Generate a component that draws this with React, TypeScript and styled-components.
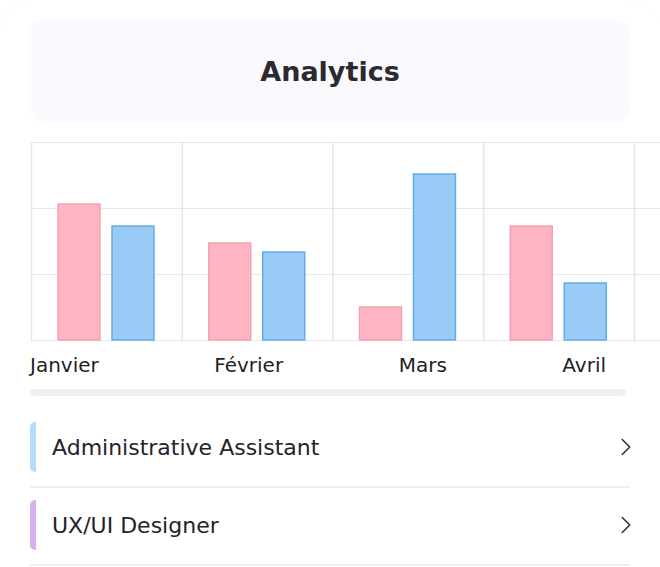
import React from "react";
import styled, { createGlobalStyle } from "styled-components";
import { ChevronRight } from "lucide-react";

const GlobalStyle = createGlobalStyle`
    body{
        margin: 0;
        background: #ffffff;
        font-family: "DejaVu Sans", "Noto Sans", sans-serif;
        color: #222226;
    }
`

interface MonthData {
    label: string
    pink: number
    blue: number
}

interface JobProps {
    title: string
    accent: string
}

const months: MonthData[] = [
    { label: "Janvier", pink: 136, blue: 114 },
    { label: "Février", pink: 97, blue: 88 },
    { label: "Mars", pink: 33, blue: 166 },
    { label: "Avril", pink: 114, blue: 57 },
]

const jobs: JobProps[] = [
    { title: "Administrative Assistant", accent: "#b5dcfb" },
    { title: "UX/UI Designer", accent: "#d7b0ef" },
]

const CHART_H = 198
const COL_W = 150.75
const BAR_W = 42

const BarChart = () => {
    const width = 700
    return (
        <ChartSvg width={width} height={CHART_H + 2} viewBox={`0 0 ${width} ${CHART_H + 2}`}>
            {[0, 66, 132, 198].map((y) => (
                <line key={y} x1={0} x2={width} y1={y + 0.5} y2={y + 0.5} stroke="#e8e8ea" strokeWidth={1.2} />
            ))}
            {[0, 1, 2, 3, 4].map((i) => (
                <line key={i} x1={i * COL_W + 0.5} x2={i * COL_W + 0.5} y1={0} y2={CHART_H + 2} stroke="#e4e4e7" strokeWidth={1.4} />
            ))}
            {months.map((m, i) => {
                const x0 = i * COL_W
                return (
                    <g key={m.label}>
                        <rect
                            x={x0 + 27}
                            y={CHART_H - m.pink}
                            width={BAR_W}
                            height={m.pink}
                            fill="#ffb4c3"
                            stroke="#f59db0"
                            strokeWidth={1.4}
                        />
                        <rect
                            x={x0 + 81}
                            y={CHART_H - m.blue}
                            width={BAR_W}
                            height={m.blue}
                            fill="#99cbf6"
                            stroke="#5ea8e6"
                            strokeWidth={1.4}
                        />
                    </g>
                )
            })}
        </ChartSvg>
    )
}

const JobRow: React.FunctionComponent<JobProps> = ({ title, accent }) => {
    return (
        <JobItem>
            <JobLine>
                <Accent $color={accent} />
                <JobTitle>{title}</JobTitle>
                <Chevron size={30} strokeWidth={1.3} color="#333338" />
            </JobLine>
        </JobItem>
    )
}

export default function App() {
    return (
        <>
            <GlobalStyle />
            <Card>
                <Header>
                    <Title>Analytics</Title>
                </Header>
                <ChartScroller>
                    <BarChart />
                </ChartScroller>
                <Labels>
                    {months.map((m) => (
                        <Label key={m.label}>{m.label}</Label>
                    ))}
                </Labels>
                <ScrollThumb />
                <JobList>
                    {jobs.map((j) => (
                        <JobRow key={j.title} title={j.title} accent={j.accent} />
                    ))}
                </JobList>
            </Card>
        </>
    )
}

const Card = styled.div`
    width: 660px;
    height: 567px;
    box-sizing: border-box;
    padding: 20px 30px 0 30px;
    border-radius: 34px 34px 0 0;
    box-shadow: 0 0 2px rgba(0, 0, 0, 0.05);
    overflow: hidden;
    background: #ffffff;
`

const Header = styled.div`
    height: 102px;
    border-radius: 16px;
    background: #f9f9fe;
    box-shadow: 0 0 6px #f9f9fe;
    display: flex;
    align-items: center;
    justify-content: center;
`

const Title = styled.h1`
    margin: 0;
    font-size: 27px;
    font-weight: 700;
    color: #2a2a30;
`

const ChartScroller = styled.div`
    margin-top: 20px;
    margin-left: 1px;
    margin-right: -30px;
    overflow: hidden;
`

const ChartSvg = styled.svg`
    display: block;
`

const Labels = styled.div`
    width: 576px;
    margin-top: 10px;
    display: flex;
    justify-content: space-between;
`

const Label = styled.span`
    font-size: 20px;
    line-height: 26px;
    color: #1f1f23;
`

const ScrollThumb = styled.div`
    margin-top: 11px;
    width: 596px;
    height: 7px;
    border-radius: 4px;
    background: #efeff1;
`

const JobList = styled.div`
    margin-top: 26px;
    display: flex;
    flex-direction: column;
`

const JobItem = styled.div`
    padding-bottom: 14px;
    border-bottom: 2px solid #efeff5;
    margin-bottom: 12px;
`

const JobLine = styled.div`
    height: 50px;
    display: flex;
    align-items: center;
`

const Accent = styled.div<{ $color: string }>`
    width: 6px;
    height: 100%;
    border-radius: 5px 0 0 5px;
    background: ${(p) => p.$color};
`

const JobTitle = styled.span`
    flex: 1;
    margin-left: 16px;
    font-size: 22px;
    color: #232328;
`

const Chevron = styled(ChevronRight)`
    margin-right: -11px;
`
